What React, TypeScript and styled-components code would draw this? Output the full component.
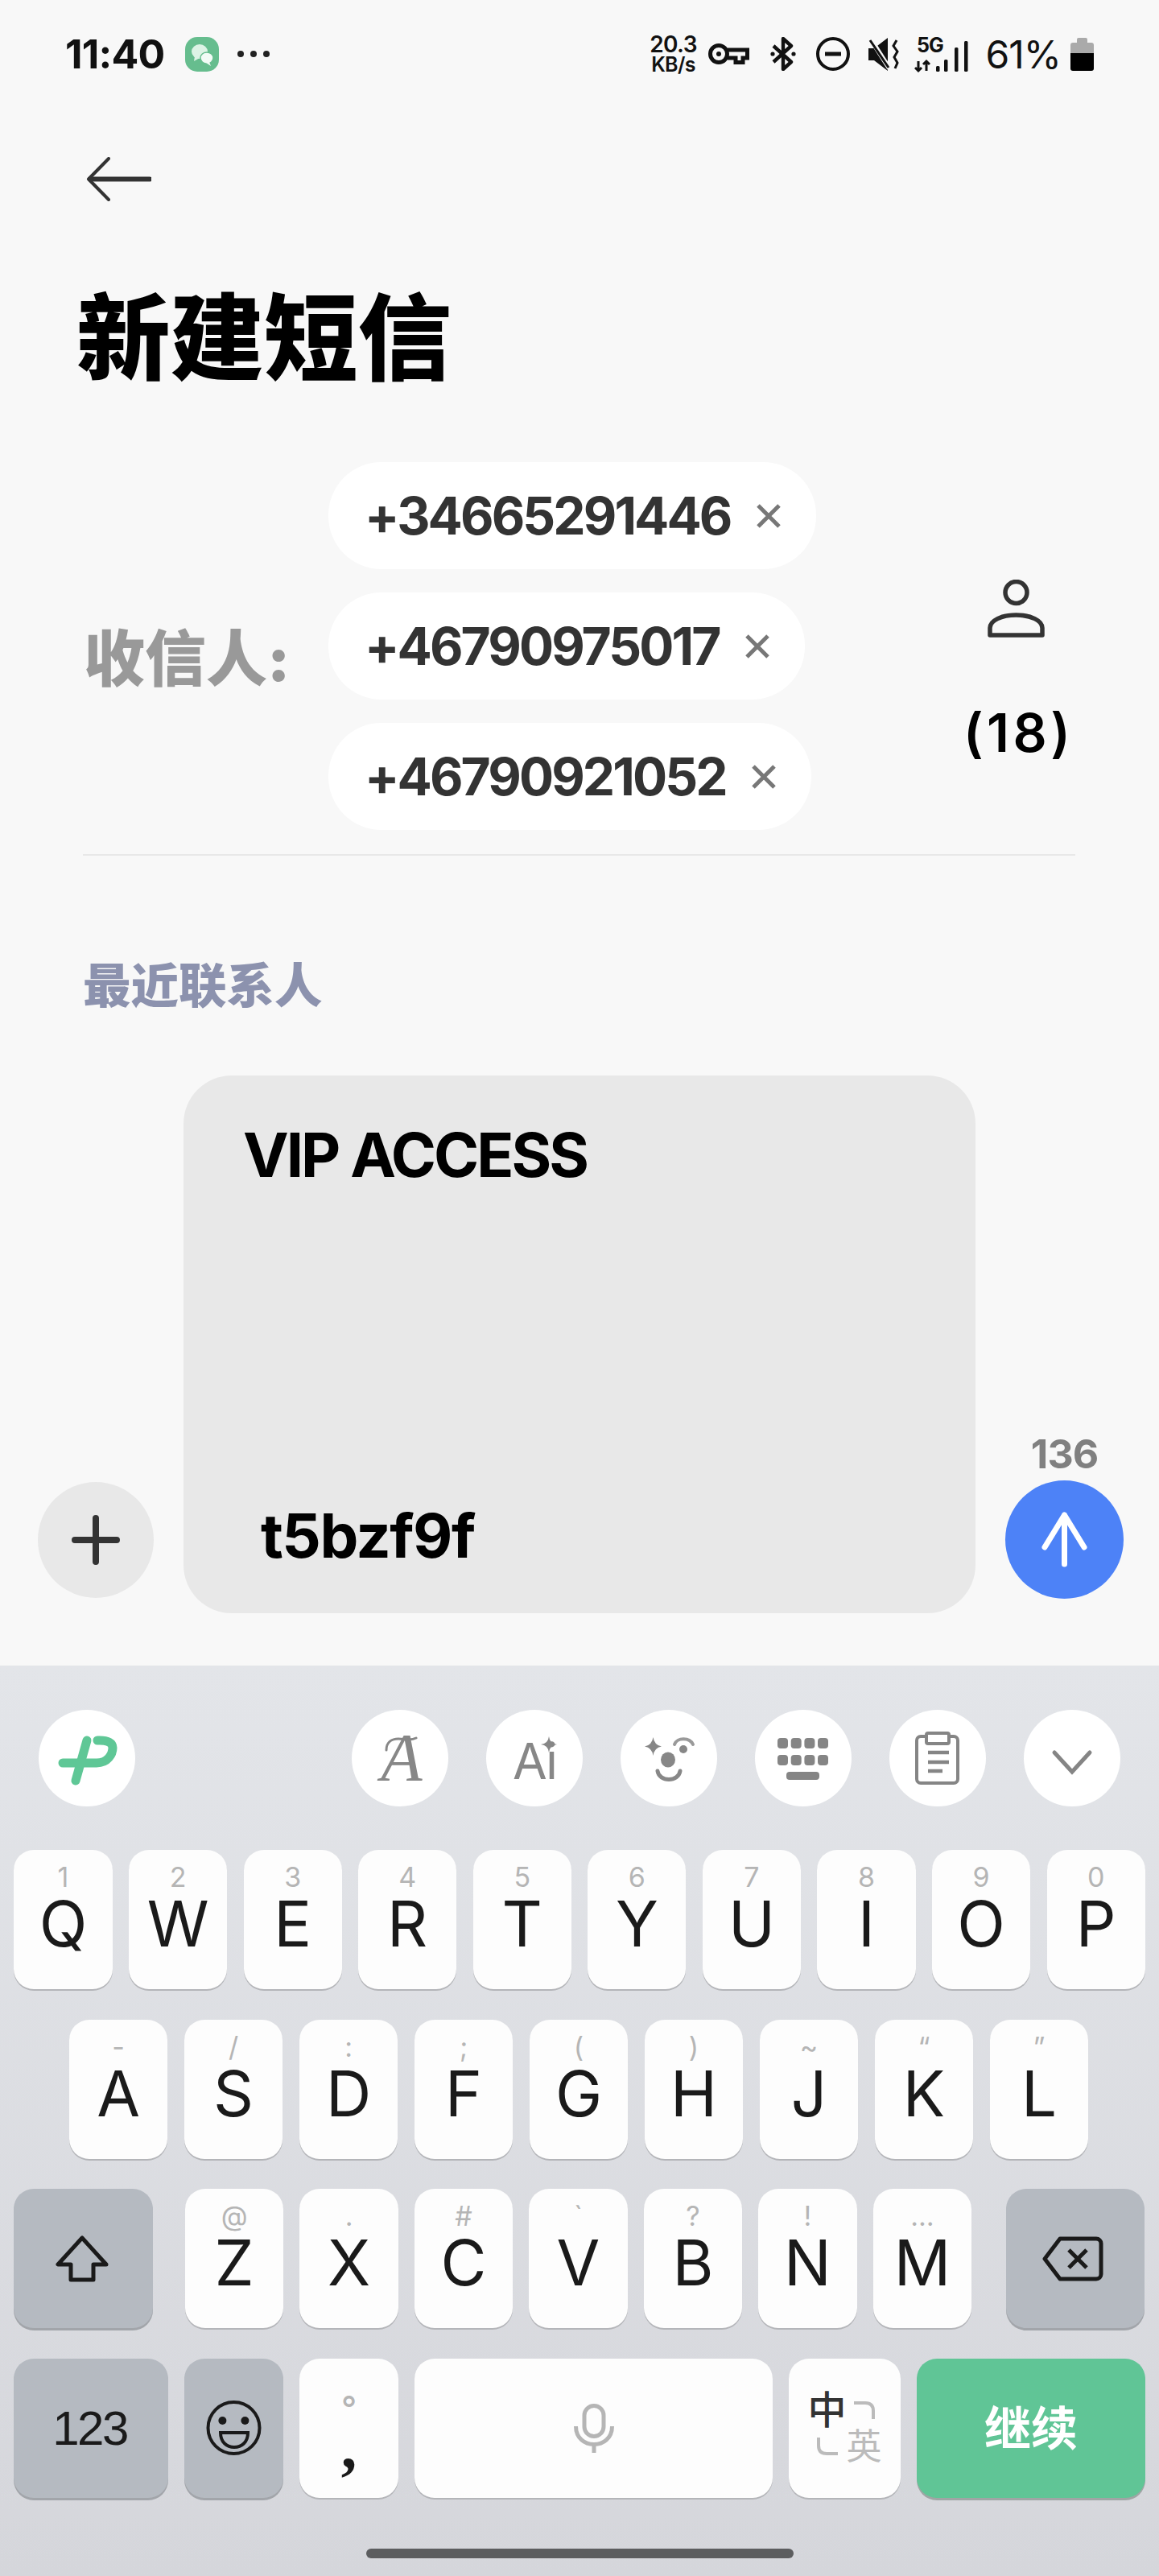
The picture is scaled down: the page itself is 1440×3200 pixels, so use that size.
import React from "react";
import styled, { createGlobalStyle } from "styled-components";

const GlobalStyle = createGlobalStyle`
  html, body { margin: 0; padding: 0; background: #f8f8f8; }
  * { box-sizing: border-box; }
  body { font-family: Inter, "Noto Sans CJK SC", sans-serif; }
`;

const Screen = styled.div`
  width: 1440px;
  height: 3200px;
  display: flex;
  flex-direction: column;
  overflow: hidden;
  background: #f8f8f8;
`;

const Main = styled.main`
  flex: 1;
  display: flex;
  flex-direction: column;
`;

/* status bar */
const StatusBar = styled.div`
  height: 134px;
  flex: none;
  display: flex;
  align-items: center;
  padding: 0 81px 0 81px;
`;

const Clock = styled.span`
  font-size: 50px;
  font-weight: 700;
  letter-spacing: -0.8px;
  color: #111;
  width: 149px;
`;

const StatusRight = styled.div`
  margin-left: auto;
  display: flex;
  align-items: center;
`;

const Speed = styled.div`
  display: flex;
  flex-direction: column;
  align-items: center;
  width: 56px;
  font-weight: 600;
  color: #111;
  div:first-child { font-size: 28px; line-height: 25px; letter-spacing: -0.6px; }
  div:last-child { font-size: 25px; line-height: 24px; letter-spacing: -0.6px; }
`;

const Battery = styled.span`
  font-size: 48px;
  font-weight: 400;
  letter-spacing: -1px;
  color: #111;
  margin: 0 12px 0 21px;
`;

const Glyph = styled.svg<{ $ml?: number; $mr?: number }>`
  display: block;
  flex: none;
  margin-left: ${(p) => p.$ml ?? 0}px;
  margin-right: ${(p) => p.$mr ?? 0}px;
`;

/* header */
const BackButton = styled.div`
  margin: 61px 0 0 107px;
  height: 55px;
`;

const Title = styled.h1`
  margin: 101px 0 0;
  padding-left: 95px;
  font-size: 116.5px;
  line-height: 140px;
  font-weight: 900;
  color: #000;
`;

/* recipients */
const Recipients = styled.section`
  margin-top: 83px;
  padding: 0 113px 0 104px;
  display: flex;
  align-items: center;
`;

const ToLabel = styled.div`
  width: 304px;
  flex: none;
  margin-top: 30px;
  font-size: 76px;
  line-height: 90px;
  font-weight: 900;
  color: #999;
  white-space: nowrap;
`;

const Chips = styled.div`
  display: flex;
  flex-direction: column;
  align-items: flex-start;
  gap: 29px;
`;

const Chip = styled.div`
  height: 133px;
  border-radius: 66px;
  background: #fff;
  padding: 0 43px 0 45px;
  display: flex;
  align-items: center;
  gap: 31px;
  font-size: 64px;
  font-weight: 700;
  letter-spacing: -2.9px;
  color: #333;
`;

const ContactSide = styled.div`
  margin-left: auto;
  margin-top: 54px;
  display: flex;
  flex-direction: column;
  align-items: center;
  gap: 88px;
`;

const Count = styled.div`
  width: 130px;
  text-align: center;
  font-size: 66px;
  line-height: 60px;
  font-weight: 600;
  letter-spacing: 4.5px;
  color: #000;
  white-space: nowrap;
`;

const Divider = styled.div`
  margin: 30px 104px 0 103px;
  height: 2px;
  background: #e8e8e8;
`;

const RecentLabel = styled.div`
  margin-top: 126px;
  padding-left: 103px;
  font-size: 59.5px;
  line-height: 70px;
  font-weight: 900;
  color: #8c92ae;
`;

/* composer */
const Composer = styled.section`
  margin-top: auto;
  padding: 0 44px 65px 47px;
  display: flex;
  align-items: flex-end;
  gap: 37px;
`;

const PlusButton = styled.div`
  width: 144px;
  height: 144px;
  margin-bottom: 19px;
  flex: none;
  border-radius: 50%;
  background: #e8e8e8;
  display: flex;
  align-items: center;
  justify-content: center;
`;

const MessageBox = styled.div`
  flex: 1;
  height: 668px;
  border-radius: 60px;
  background: #e8e8e8;
  padding: 53px 0 52px 74px;
  display: flex;
  flex-direction: column;
  justify-content: space-between;
  color: #000;
  font-size: 76px;
  line-height: 90px;
  font-weight: 700;
`;

const MessageLine = styled.div<{ $indent?: number; $track: number }>`
  padding-left: ${(p) => p.$indent ?? 0}px;
  letter-spacing: ${(p) => p.$track}px;
`;

const SendColumn = styled.div`
  width: 147px;
  flex: none;
  margin-bottom: 18px;
  display: flex;
  flex-direction: column;
  align-items: center;
  gap: 8px;
`;

const CharCount = styled.div`
  font-size: 50px;
  line-height: 50px;
  font-weight: 700;
  letter-spacing: -1px;
  color: #808080;
`;

const SendButton = styled.div`
  width: 147px;
  height: 147px;
  border-radius: 50%;
  background: #4d82f7;
  display: flex;
  align-items: center;
  justify-content: center;
`;

/* keyboard */
const Keyboard = styled.section`
  height: 1131px;
  flex: none;
  padding-top: 55px;
  display: flex;
  flex-direction: column;
  background: linear-gradient(#e3e5e9, #d5d6db);
`;

const ToolRow = styled.div`
  padding: 0 48px;
  margin-bottom: 54px;
  display: flex;
  gap: 47px;
`;

const ToolButton = styled.div<{ $push?: boolean }>`
  position: relative;
  width: 120px;
  height: 120px;
  flex: none;
  border-radius: 50%;
  background: #fff;
  display: flex;
  align-items: center;
  justify-content: center;
  color: #878787;
  ${(p) => (p.$push ? "margin-right: auto;" : "")}
`;

const ScriptA = styled.span`
  font-family: "Liberation Serif", serif;
  font-style: italic;
  font-size: 84px;
  line-height: 1;
  margin-left: 4px;
`;

const Swash = styled.svg`
  position: absolute;
  left: 40px;
  top: 32px;
`;

const AiText = styled.span`
  font-size: 62px;
  font-weight: 400;
  letter-spacing: -2px;
  margin-top: 6px;
`;

const Sparkle = styled.svg`
  position: absolute;
  left: 68px;
  top: 33px;
`;

const KeyRow = styled.div<{ $left: number; $gap: number }>`
  height: 173px;
  margin-bottom: 37.5px;
  padding-left: ${(p) => p.$left}px;
  display: flex;
  gap: ${(p) => p.$gap}px;
`;

type Tone = "plain" | "func" | "go";

const toneBg: Record<Tone, string> = { plain: "#fdfdfd", func: "#b5bac1", go: "#60c596" };
const toneEdge: Record<Tone, string> = { plain: "#b4b5b9", func: "#a2a5aa", go: "#9fa5a4" };

const Key = styled.div<{ $w?: number; $tone?: Tone; $pad?: number; $ml?: number; $mr?: number }>`
  width: ${(p) => p.$w ?? 122.2}px;
  flex: none;
  height: 173px;
  margin-left: ${(p) => p.$ml ?? 0}px;
  margin-right: ${(p) => p.$mr ?? 0}px;
  border-radius: 25px;
  background: ${(p) => toneBg[p.$tone ?? "plain"]};
  box-shadow: 0 ${(p) => (p.$tone && p.$tone !== "plain" ? 3 : 2)}px 0 ${(p) => toneEdge[p.$tone ?? "plain"]};
  padding-top: ${(p) => p.$pad ?? 16}px;
  display: flex;
  flex-direction: column;
  align-items: center;
`;

const CenterKey = styled(Key)`
  padding-top: 0;
  justify-content: center;
`;

const Hint = styled.div`
  height: 36px;
  font-size: 34px;
  line-height: 36px;
  font-weight: 400;
  color: #b5b5b5;
`;

const Letter = styled.div`
  margin-top: 2px;
  font-size: 78px;
  line-height: 76px;
  font-weight: 400;
  color: #1a1a1a;
`;

const DegreeHint = styled(Hint)`
  font-size: 42px;
  font-weight: 500;
`;

const CommaLetter = styled(Letter)`
  margin-top: -8px;
  font-family: "Liberation Serif", serif;
  font-weight: 700;
`;

const NumKeyLabel = styled.span`
  font-family: "Liberation Sans", sans-serif;
  font-size: 60px;
  letter-spacing: -2.5px;
  margin-right: 3px;
  color: #1a1a1a;
`;

const GoLabel = styled.span`
  font-size: 58px;
  font-weight: 700;
  margin-bottom: 6px;
  color: #fff;
`;

const LangGrid = styled.div`
  display: grid;
  grid-template-columns: 48px 44px;
  grid-template-rows: 46px 44px;
  align-items: center;
  justify-items: center;
`;

const LangActive = styled.span`
  font-size: 48px;
  line-height: 46px;
  font-weight: 500;
  color: #333;
`;

const LangIdle = styled.span`
  font-size: 44px;
  line-height: 44px;
  font-weight: 400;
  color: #bbb;
`;

const HomeBar = styled.div`
  width: 531px;
  height: 12px;
  margin: 25.5px auto 0;
  border-radius: 6px;
  background: #5c5d5f;
`;

const rowOne = [
  ["1", "Q"], ["2", "W"], ["3", "E"], ["4", "R"], ["5", "T"],
  ["6", "Y"], ["7", "U"], ["8", "I"], ["9", "O"], ["0", "P"],
];
const rowTwo = [
  ["-", "A"], ["/", "S"], [":", "D"], [";", "F"], ["(", "G"],
  [")", "H"], ["~", "J"], ["“", "K"], ["”", "L"],
];
const rowThree = [
  ["@", "Z"], [".", "X"], ["#", "C"], ["`", "V"], ["?", "B"], ["!", "N"], ["…", "M"],
];

const numbers = ["+34665291446", "+46790975017", "+46790921052"];

function LetterKey({ hint, letter }: { hint: string; letter: string }) {
  return (
    <Key>
      <Hint>{hint}</Hint>
      <Letter>{letter}</Letter>
    </Key>
  );
}

function CloseIcon() {
  return (
    <Glyph width="32" height="30" viewBox="0 0 32 30" fill="none" stroke="#777" strokeWidth="5">
      <path d="M3 2 L29 28 M29 2 L3 28" />
    </Glyph>
  );
}

export default function App() {
  return (
    <Screen>
      <GlobalStyle />
      <Main>
        <StatusBar>
          <Clock>11:40</Clock>
          <Glyph width="42" height="43" viewBox="0 0 42 43" $mr={22}>
            <rect width="42" height="43" rx="15" fill="#66bd8e" />
            <ellipse cx="18" cy="18" rx="10" ry="9" fill="#dcf3e5" />
            <path d="M12 24 L11 30 L18 26Z" fill="#dcf3e5" />
            <ellipse cx="27" cy="26" rx="8" ry="7" fill="#f2fbf6" stroke="#66bd8e" strokeWidth="1.5" />
            <path d="M30 31 L32 36 L26 32Z" fill="#f2fbf6" />
          </Glyph>
          <Glyph width="42" height="10" viewBox="0 0 42 10" fill="#222">
            <circle cx="5" cy="5" r="4" />
            <circle cx="21" cy="5" r="4" />
            <circle cx="37" cy="5" r="4" />
          </Glyph>
          <StatusRight>
            <Speed>
              <div>20.3</div>
              <div>KB/s</div>
            </Speed>
            <Glyph width="51" height="26" viewBox="0 0 51 26" fill="none" stroke="#111" strokeWidth="5" $ml={15}>
              <circle cx="13" cy="13" r="10.5" />
              <circle cx="13" cy="13" r="3" fill="#111" stroke="none" />
              <path d="M24 8 H48.5 V18 H43 V23.5 H34 V18 H24" />
            </Glyph>
            <Glyph width="32" height="42" viewBox="0 0 32 42" fill="none" stroke="#111" strokeWidth="4.4" $ml={26}>
              <path d="M4 11 L26 31 L16 40 V2 L26 11 L4 31" strokeLinejoin="round" />
              <circle cx="3" cy="21" r="2.6" fill="#111" stroke="none" />
              <circle cx="29" cy="21" r="2.6" fill="#111" stroke="none" />
            </Glyph>
            <Glyph width="42" height="42" viewBox="0 0 42 42" fill="none" stroke="#111" strokeWidth="4" $ml={25}>
              <circle cx="21" cy="21" r="19" />
              <path d="M11 21 H31" strokeWidth="5" />
            </Glyph>
            <Glyph width="38" height="41" viewBox="0 0 38 41" $ml={23}>
              <path d="M0 13 H7 L24 0 V41 L7 28 H0Z" fill="#111" />
              <path d="M3 2 L26 38" stroke="#f8f8f8" strokeWidth="6" />
              <path d="M2 3 L25 37" stroke="#111" strokeWidth="3" />
              <path d="M35 3 L31 10 L36 17 L32 24 L36 31 L33 38" fill="none" stroke="#111" strokeWidth="3" />
            </Glyph>
            <Glyph width="68" height="55" viewBox="0 -6 68 55" $ml={19}>
              <text x="3" y="19" fontSize="25" fontWeight="700" letterSpacing="-1" fill="#111">5G</text>
              <path d="M5 30 V42 M1 38 L5 42 L9 38 M15 42 V31 M11 34 L15 30 L19 34" fill="none" stroke="#111" strokeWidth="3" />
              <rect x="27" y="36" width="4.5" height="7" rx="1.5" fill="#111" />
              <rect x="37" y="28" width="4.5" height="15" rx="1.5" fill="#111" />
              <rect x="50" y="13" width="4.5" height="30" rx="1.5" fill="#111" />
              <rect x="62" y="5" width="4.5" height="38" rx="1.5" fill="#111" />
            </Glyph>
            <Battery>61%</Battery>
            <Glyph width="29" height="41" viewBox="0 0 29 41">
              <path d="M8 2 Q8 0 10 0 H19 Q21 0 21 2 V6 H26 Q29 6 29 9 V19 H0 V9 Q0 6 3 6 H8Z" fill="#aaa" />
              <path d="M0 19 H29 V38 Q29 41 26 41 H3 Q0 41 0 38Z" fill="#000" />
            </Glyph>
          </StatusRight>
        </StatusBar>

        <BackButton>
          <Glyph width="81" height="55" viewBox="0 0 81 55" fill="none" stroke="#333">
            <path d="M28 2 L3 27.5 L28 53" strokeWidth="4" strokeLinecap="round" strokeLinejoin="round" />
            <path d="M5 27.5 H79" strokeWidth="6" strokeLinecap="round" />
          </Glyph>
        </BackButton>

        <Title>新建短信</Title>

        <Recipients>
          <ToLabel>收信人:</ToLabel>
          <Chips>
            {numbers.map((n) => (
              <Chip key={n}>
                {n}
                <CloseIcon />
              </Chip>
            ))}
          </Chips>
          <ContactSide>
            <Glyph width="73" height="72" viewBox="0 0 73 72" fill="none" stroke="#333" strokeWidth="5.5">
              <circle cx="36.5" cy="16" r="13.5" />
              <path d="M4 69 H69 V60 C69 51 55 44 36.5 44 C18 44 4 51 4 60 Z" strokeLinejoin="round" />
            </Glyph>
            <Count>(18)</Count>
          </ContactSide>
        </Recipients>
        <Divider />

        <RecentLabel>最近联系人</RecentLabel>

        <Composer>
          <PlusButton>
            <Glyph width="60" height="62" viewBox="0 0 60 62" stroke="#333" strokeWidth="8" strokeLinecap="round">
              <path d="M30 4 V58 M4 31 H56" />
            </Glyph>
          </PlusButton>
          <MessageBox>
            <MessageLine $track={-3}>VIP ACCESS</MessageLine>
            <MessageLine $indent={22} $track={-1.5}>t5bzf9f</MessageLine>
          </MessageBox>
          <SendColumn>
            <CharCount>136</CharCount>
            <SendButton>
              <Glyph width="59" height="69" viewBox="0 0 59 69" fill="none" stroke="#fff" strokeWidth="7" strokeLinecap="round" strokeLinejoin="round">
                <path d="M29.5 4 V65 M5 44 L29.5 4 L54 44" />
              </Glyph>
            </SendButton>
          </SendColumn>
        </Composer>
      </Main>

      <Keyboard>
        <ToolRow>
          <ToolButton $push>
            <Glyph width="120" height="120" viewBox="0 0 120 120" fill="none" stroke="#5fc796" strokeWidth="11" strokeLinecap="round">
              <path d="M60 38 L46 88" />
              <path d="M30 66 H72 C86 66 92 55 92 47 C92 41 86 38 76 38 H73" />
            </Glyph>
          </ToolButton>
          <ToolButton>
            <ScriptA>A</ScriptA>
            <Swash width="42" height="20" viewBox="0 0 42 20" fill="none" stroke="#878787" strokeWidth="3" strokeLinecap="round">
              <path d="M3 18 C3 8 10 4 18 4 C26 4 32 7 40 3" />
            </Swash>
          </ToolButton>
          <ToolButton>
            <AiText>Ai</AiText>
            <Sparkle width="20" height="20" viewBox="0 0 20 20" fill="#878787">
              <path d="M10 0 Q11 9 20 10 Q11 11 10 20 Q9 11 0 10 Q9 9 10 0Z" />
            </Sparkle>
          </ToolButton>
          <ToolButton>
            <Glyph width="120" height="120" viewBox="0 0 120 120" fill="none" stroke="#878787">
              <path d="M40.5 34 Q42 44 51 45.5 Q42 47 40.5 57 Q39 47 30 45.5 Q39 44 40.5 34Z" fill="#878787" stroke="none" />
              <path d="M67 43 C70 34 86 34 90 43" stroke="#9a9a9a" strokeWidth="4" strokeLinecap="round" />
              <circle cx="78" cy="49" r="5" fill="#878787" stroke="none" />
              <ellipse cx="59" cy="62" rx="9" ry="9.5" fill="#878787" stroke="none" />
              <path d="M46 76 C48 90 72 90 74 76" strokeWidth="5" strokeLinecap="round" />
            </Glyph>
          </ToolButton>
          <ToolButton>
            <Glyph width="120" height="120" viewBox="0 0 120 120" fill="#858585">
              {[28, 44.7, 61.4, 78].map((x) => (
                <React.Fragment key={x}>
                  <rect x={x} y="35" width="13" height="13" rx="4" />
                  <rect x={x} y="56" width="13" height="13" rx="4" />
                </React.Fragment>
              ))}
              <rect x="39" y="77" width="41" height="10" rx="4" />
            </Glyph>
          </ToolButton>
          <ToolButton>
            <Glyph width="120" height="120" viewBox="0 0 120 120" fill="none" stroke="#858585" strokeWidth="4">
              <rect x="34" y="33" width="51" height="58" rx="5" />
              <rect x="46" y="29" width="28" height="13" rx="2" fill="#fff" />
              <path d="M48 53 H74 M48 65 H74 M48 76 H66" strokeWidth="4.5" />
            </Glyph>
          </ToolButton>
          <ToolButton>
            <Glyph width="120" height="120" viewBox="0 0 120 120" fill="none" stroke="#858585" strokeWidth="5" strokeLinecap="round">
              <path d="M38 53 L60 77 L82 53" />
            </Glyph>
          </ToolButton>
        </ToolRow>

        <KeyRow $left={17.4} $gap={20.4}>
          {rowOne.map(([h, l]) => (
            <LetterKey key={l} hint={h} letter={l} />
          ))}
        </KeyRow>
        <KeyRow $left={86} $gap={20.8}>
          {rowTwo.map(([h, l]) => (
            <LetterKey key={l} hint={h} letter={l} />
          ))}
        </KeyRow>
        <KeyRow $left={17} $gap={20.3}>
          <CenterKey $w={173} $tone="func" $mr={19.7}>
            <Glyph width="66" height="58" viewBox="0 0 66 58" fill="none" stroke="#1a1a1a" strokeWidth="5" strokeLinejoin="round" $mr={3}>
              <path d="M33 3 L3 36 H19 V55 H47 V36 H63 Z" />
            </Glyph>
          </CenterKey>
          {rowThree.map(([h, l]) => (
            <LetterKey key={l} hint={h} letter={l} />
          ))}
          <CenterKey $w={172} $tone="func" $ml={22.7}>
            <Glyph width="76" height="56" viewBox="0 0 76 56" fill="none" stroke="#1a1a1a" strokeWidth="5" strokeLinejoin="round" $mr={6}>
              <path d="M22 3 H67 A6 6 0 0 1 73 9 V47 A6 6 0 0 1 67 53 H22 L3 28 Z" />
              <path d="M33 17 L55 39 M55 17 L33 39" />
            </Glyph>
          </CenterKey>
        </KeyRow>
        <KeyRow $left={17} $gap={20}>
          <CenterKey $w={192} $tone="func">
            <NumKeyLabel>123</NumKeyLabel>
          </CenterKey>
          <CenterKey $w={123} $tone="func">
            <Glyph width="69" height="68" viewBox="0 0 69 68" fill="none" stroke="#1a1a1a" strokeWidth="4">
              <circle cx="34.5" cy="34" r="32" />
              <circle cx="20.4" cy="25" r="5" fill="#1a1a1a" stroke="none" />
              <circle cx="48.4" cy="25" r="5" fill="#1a1a1a" stroke="none" />
              <path d="M18 40 H52 C52 52 44 58 35 58 C26 58 18 52 18 40 Z" />
            </Glyph>
          </CenterKey>
          <Key $w={123} $pad={44}>
            <DegreeHint>°</DegreeHint>
            <CommaLetter>,</CommaLetter>
          </Key>
          <CenterKey $w={445}>
            <Glyph width="50" height="61" viewBox="0 0 50 61" fill="none" stroke="#b5b5b5" strokeWidth="5">
              <rect x="13" y="2.5" width="24" height="38" rx="12" />
              <path d="M2.5 28 C2.5 58 47.5 58 47.5 28 M25 48 V61" />
            </Glyph>
          </CenterKey>
          <CenterKey $w={139}>
            <LangGrid>
              <LangActive>中</LangActive>
              <Glyph width="26" height="22" viewBox="0 0 26 22" fill="none" stroke="#bbb" strokeWidth="4">
                <path d="M0 2 H14 Q24 2 24 12 V22" />
              </Glyph>
              <Glyph width="26" height="22" viewBox="0 0 26 22" fill="none" stroke="#bbb" strokeWidth="4">
                <path d="M2 0 V10 Q2 20 12 20 H26" />
              </Glyph>
              <LangIdle>英</LangIdle>
            </LangGrid>
          </CenterKey>
          <CenterKey $w={284} $tone="go">
            <GoLabel>继续</GoLabel>
          </CenterKey>
        </KeyRow>
        <HomeBar />
      </Keyboard>
    </Screen>
  );
}
